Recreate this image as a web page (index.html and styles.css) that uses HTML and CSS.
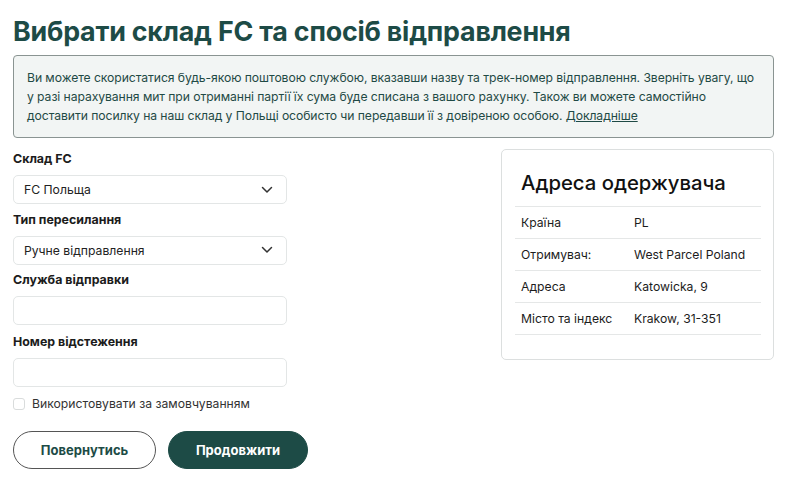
FILE: index.html
```html
<!DOCTYPE html>
<html lang="uk">
<head>
<meta charset="utf-8">
<link rel="stylesheet" href="styles.css">
</head>
<body>
<div class="page">
  <h1 class="title">Вибрати склад FC та спосіб відправлення</h1>
  <div class="alert">Ви можете скористатися будь-якою поштовою службою, вказавши назву та трек-номер відправлення. Зверніть увагу, що у разі нарахування мит при отриманні партії їх сума буде списана з вашого рахунку. Також ви можете самостійно доставити посилку на наш склад у Польщі особисто чи передавши її з довіреною особою. <a class="more" href="#">Докладніше</a></div>
  <div class="content">
    <form class="form">
      <label class="label">Склад FC</label>
      <div class="select"><span>FC Польща</span><svg class="chev" viewBox="0 0 12 8" width="12" height="8"><path d="M1.5 1.5 L6 6 L10.5 1.5" fill="none" stroke="#333" stroke-width="1.5" stroke-linecap="round" stroke-linejoin="round"/></svg></div>
      <label class="label">Тип пересилання</label>
      <div class="select"><span>Ручне відправлення</span><svg class="chev" viewBox="0 0 12 8" width="12" height="8"><path d="M1.5 1.5 L6 6 L10.5 1.5" fill="none" stroke="#333" stroke-width="1.5" stroke-linecap="round" stroke-linejoin="round"/></svg></div>
      <label class="label">Служба відправки</label>
      <div class="input"></div>
      <label class="label">Номер відстеження</label>
      <div class="input"></div>
      <label class="check"><span class="box"></span>Використовувати за замовчуванням</label>
      <div class="buttons">
        <button type="button" class="btn btn-outline">Повернутись</button>
        <button type="button" class="btn btn-primary">Продовжити</button>
      </div>
    </form>
    <div class="card">
      <h2 class="card-title">Адреса одержувача</h2>
      <table class="addr">
        <tr><td>Країна</td><td>PL</td></tr>
        <tr><td>Отримувач:</td><td>West Parcel Poland</td></tr>
        <tr><td>Адреса</td><td>Katowicka, 9</td></tr>
        <tr><td>Місто та індекс</td><td>Krakow, 31-351</td></tr>
      </table>
    </div>
  </div>
</div>
</body>
</html>
```

FILE: styles.css
```css
* { box-sizing: border-box; }
html, body { margin: 0; padding: 0; background: #fff; }
body { font-family: Inter, "Noto Sans", sans-serif; color: #1c1c1c; }
.page { padding: 13px 26px 0 13px; }
.title {
  margin: 0;
  font-size: 26.8px;
  line-height: 36px;
  font-weight: 700;
  color: #1d4b46;
  letter-spacing: -0.2px;
}
.alert {
  margin-top: 6px;
  border: 1px solid #8a9492;
  border-radius: 4px;
  background: #f2f5f4;
  color: #1f4a45;
  font-size: 12.2px;
  letter-spacing: -0.08px;
  line-height: 19px;
  padding: 12px 14px 12px 13px;
}
.more { color: #1f4a45; text-decoration: underline; }
.content {
  display: flex;
  justify-content: space-between;
  align-items: flex-start;
  margin-top: 12px;
}
.form { width: 274px; display: flex; flex-direction: column; }
.label {
  font-size: 12.4px;
  font-weight: 700;
  color: #1c1c1c;
  line-height: 16px;
  margin: 1px 0 8px;
}
.select, .input {
  height: 29px;
  border: 1px solid #e3e6e6;
  border-radius: 5px;
  background: #fff;
  margin-bottom: 6.5px;
}
.select {
  display: flex;
  align-items: center;
  justify-content: space-between;
  padding: 0 13px 0 10px;
  font-size: 12.2px;
  color: #222;
}
.input { margin-bottom: 7.5px; }
.check {
  display: flex;
  align-items: center;
  font-size: 12.2px;
  color: #333;
  margin-top: 2px;
}
.box {
  width: 12px; height: 12px;
  border: 1px solid #d9dcdc;
  border-radius: 3px;
  margin-right: 7px;
}
.buttons { display: flex; gap: 12px; margin-top: 20px; }
.btn {
  flex-shrink: 0;
  height: 38px;
  border-radius: 19px;
  font-family: Inter, "Noto Sans", sans-serif;
  font-size: 13px;
  font-weight: 700;
  padding: 0;
}
.btn-outline {
  width: 143px;
  background: #fff;
  border: 1px solid #555;
  color: #1d4b46;
}
.btn-primary {
  width: 140px;
  background: #1d4b46;
  border: 1px solid #1d4b46;
  color: #fff;
}
.card {
  width: 273px;
  margin-top: -1px;
  border: 1px solid #dcdfdf;
  border-radius: 5px;
  padding: 20px 12px 24px 13px;
}
.card-title {
  margin: 0 0 10px 6px;
  font-size: 20.3px;
  font-weight: 500;
  line-height: 26px;
  color: #111;
}
.addr { width: 100%; border-collapse: collapse; font-size: 12.2px; color: #1c1c1c; }
.addr td { height: 32px; border-top: 1px solid #e5e7e7; padding: 0 0 0 6px; }
.addr tr:last-child td { border-bottom: 1px solid #e5e7e7; }
.addr td:first-child { width: 113px; }
```
